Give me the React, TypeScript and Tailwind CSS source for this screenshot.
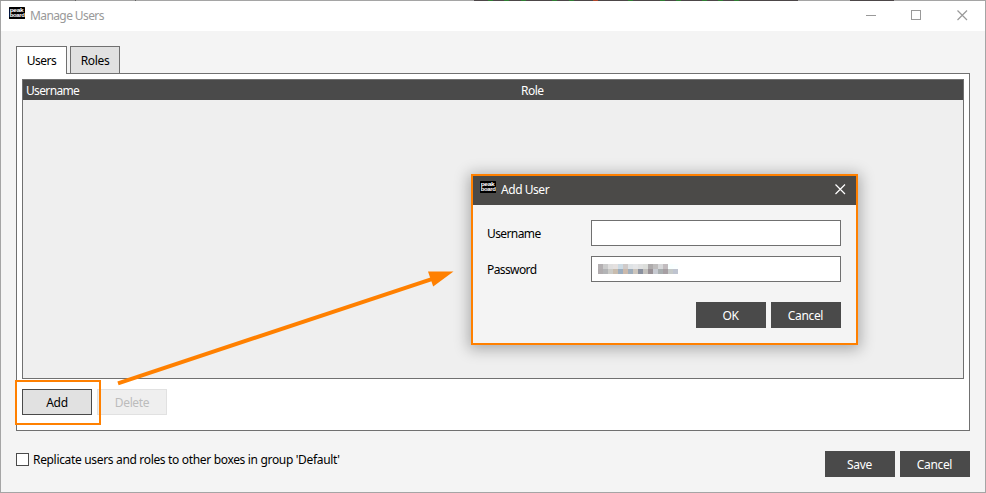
import type { ReactNode } from "react";

const topEdge: [number, string][] = [
  [75, "#989898"], [1, "#606060"], [59, "#a5a5a5"], [1, "#606060"], [338, "#a5a5a5"],
];
const specks = [488, 504, 521, 552, 569, 628, 660, 676, 702, 718, 734];

const pixels = [
  ["#b4b0b2", "#cccccc", "#e0dfdf", "#e5e1e0", "#cddbe4", "#cfcac9", "#dfe3e6", "#e5e6e8", "#e0e1e1", "#dcdedb", "#aeabac", "#bfbdbd", "#d7d8da", "#c2bcbf", "#f8ffff", "#fbffff"],
  ["#b1acae", "#b3b4b6", "#cbcbc7", "#c8bcae", "#9badbf", "#cbb9ab", "#9faebc", "#cdc6bd", "#8a919f", "#c2c0bc", "#999196", "#c7cad1", "#a8aeaf", "#a69fa3", "#c5c9c8", "#bfc4d0"],
];

function Logo() {
  return (
    <svg width="16" height="12" viewBox="0 0 16 12" className="block shrink-0">
      <rect width="16" height="12" rx="0.5" fill="#000" />
      <g fill="#fff" fontFamily="'Liberation Sans', sans-serif" fontSize="5.8" fontWeight="700">
        <text x="0.7" y="4.9" textLength="13.6" lengthAdjust="spacingAndGlyphs">peak</text>
        <text x="0.7" y="9.7" textLength="14.8" lengthAdjust="spacingAndGlyphs">board</text>
      </g>
    </svg>
  );
}

function Cross({ color }: { color: string }) {
  return (
    <svg width="11" height="11" viewBox="0 0 11 11" className="block" stroke={color} strokeWidth="1.2">
      <path d="M0.5 0.5 10 10M10 0.5 0.5 10" />
    </svg>
  );
}

function DarkButton({ children }: { children: ReactNode }) {
  return (
    <button className="flex h-[26px] w-[70px] items-center justify-center bg-[#4a4a4a] pt-px pr-px text-white">
      {children}
    </button>
  );
}

function Field({ label, children }: { label: string; children?: ReactNode }) {
  return (
    <div className="flex h-[26px] items-center">
      <span className="w-[104px] pt-[2px] tracking-[-0.6px]">{label}</span>
      <div className="h-[26px] w-[250px] border border-[#707070] bg-white pt-[7px] pl-[6px]">{children}</div>
    </div>
  );
}

function AddUserDialog() {
  return (
    <div className="absolute top-[174px] left-[471px] h-[171px] w-[387px] border-2 border-[#ff8000] bg-[#f4f4f4] shadow-[0_2px_14px_2px_rgba(0,0,0,0.3)]">
      <div className="flex h-[29px] items-start bg-[#4b4a48] pr-[10px] pl-[7px] text-white">
        <div className="pt-[5px]"><Logo /></div>
        <span className="pt-[5px] pl-[5px] tracking-[-0.45px]">Add User</span>
        <div className="ml-auto pt-[8px]"><Cross color="#fff" /></div>
      </div>
      <div className="flex flex-col gap-[10px] pt-[15px] pl-[14px]">
        <Field label="Username" />
        <Field label="Password">
          {pixels.map((row, r) => (
            <div key={r} className="flex">
              {row.map((c, i) => (
                <span key={i} className="h-[5px] w-[5px]" style={{ backgroundColor: c }} />
              ))}
            </div>
          ))}
        </Field>
      </div>
      <div className="mt-[20px] mr-[15px] flex justify-end gap-[5px]">
        <DarkButton>OK</DarkButton>
        <DarkButton>Cancel</DarkButton>
      </div>
    </div>
  );
}

export default function App() {
  return (
    <div className="relative flex h-[493px] w-[986px] flex-col overflow-hidden bg-[#f4f4f4] font-['Noto_Sans','Open_Sans',sans-serif] text-[12px] leading-[18px] tracking-[-0.35px] text-black">
      <div className="flex h-px shrink-0 bg-[#a5a5a5]">
        {topEdge.map(([w, c], i) => (
          <span key={i} className="h-px shrink-0" style={{ width: w, backgroundColor: c }} />
        ))}
        <span className="h-px w-[324px] shrink-0 bg-[#4c4648]" />
        <span className="ml-[52px] h-px w-[44px] bg-[#4c4648]" />
      </div>
      <div className="flex min-h-0 flex-1 flex-col border-x border-b border-[#a5a5a5]">
        <header className="flex h-[30px] shrink-0 items-start bg-white pr-[17px] pl-[8px] text-[#999]">
          <div className="pt-[6px]"><Logo /></div>
          <span className="pt-[6px] pl-[5px] tracking-[-0.6px]">Manage Users</span>
          <div className="ml-auto flex items-start pt-[9px]">
            <span className="mt-[5px] mr-[35px] h-px w-[10px] bg-[#999]" />
            <span className="mr-[36px] h-[10px] w-[10px] border border-[#999]" />
            <Cross color="#999" />
          </div>
        </header>
        <main className="px-[15px] pt-[15px]">
          <div className="flex h-[27px] gap-[3px]">
            <div className="relative z-10 flex h-[28px] w-[51px] justify-center border border-b-0 border-[#707070] bg-white pt-[5px] tracking-[-0.5px]">Users</div>
            <div className="flex h-[27px] w-[50px] justify-center border border-b-0 border-[#707070] bg-[#e1e1e1] pt-[5px]">Roles</div>
          </div>
          <section className="h-[358px] border border-[#707070] bg-white p-[5px]">
            <div className="h-[300px] border border-[#707070] bg-[#efefef]">
              <div className="flex h-[20px] bg-[#4a4a4a] pl-[3px] text-white">
                <span className="w-[495px] pt-[2px] tracking-[-0.65px]">Username</span>
                <span className="pt-[2px] tracking-[-0.5px]">Role</span>
              </div>
            </div>
            <div className="mt-[10px] flex gap-[5px]">
              <button className="flex h-[26px] w-[70px] items-center justify-center border border-[#4a4a4a] bg-[#e1e1e1] pt-px">Add</button>
              <button className="flex h-[26px] w-[70px] items-center justify-center border border-[#e1e1e1] bg-[#efefef] pt-px text-[#bcbcbc]">Delete</button>
            </div>
          </section>
          <footer className="flex items-start pt-[20px]">
            <span className="mt-[2px] h-[13px] w-[13px] border border-[#4a4a4a] bg-white" />
            <span className="pl-[4px] tracking-[-0.33px]">Replicate users and roles to other boxes in group 'Default'</span>
            <div className="ml-auto flex gap-[5px]">
              <DarkButton>Save</DarkButton>
              <DarkButton>Cancel</DarkButton>
            </div>
          </footer>
        </main>
      </div>
      <svg className="pointer-events-none absolute inset-0" width="986" height="1" viewBox="0 0 986 1">
        {specks.map((x) => (
          <rect key={x} x={x} y="0" width="5" height="1" fill="#2e7d32" />
        ))}
        <rect x="593" y="0" width="5" height="1" fill="#b0452a" />
      </svg>
      <AddUserDialog />
      <div className="absolute top-[380px] left-[15px] h-[45px] w-[86px] border-2 border-[#ff8000]" />
      <svg className="pointer-events-none absolute inset-0" width="986" height="493" viewBox="0 0 986 493">
        <path d="M118 383.3 434 278.3" stroke="#ff8000" strokeWidth="4" />
        <path d="M453.5 271.5 428 271.5 433.2 286.5Z" fill="#ff8000" />
      </svg>
    </div>
  );
}
